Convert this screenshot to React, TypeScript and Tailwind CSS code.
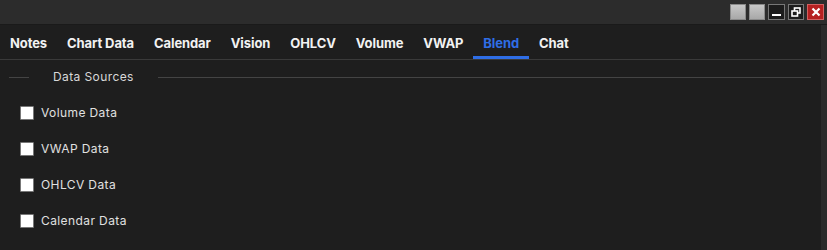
import React from "react";

const tabs = ["Notes", "Chart Data", "Calendar", "Vision", "OHLCV", "Volume", "VWAP", "Blend", "Chat"];
const items = ["Volume Data", "VWAP Data", "OHLCV Data", "Calendar Data"];

export default function App() {
  return (
    <div className="w-[827px] h-[250px] bg-[#1e1e1e] flex flex-col overflow-hidden" style={{ fontFamily: "Inter, 'Noto Sans', sans-serif" }}>
      <div className="h-[25px] bg-[#2c2c2c] border-b border-[#1a1a1a] flex items-start justify-end pt-[4px] pr-[3px] gap-[3px]">
        <div className="w-[16px] h-[16px] bg-gradient-to-b from-[#c8c8c8] to-[#a8a8a8] border border-[#8a8a8a]" />
        <div className="w-[16px] h-[16px] bg-gradient-to-b from-[#c8c8c8] to-[#a8a8a8] border border-[#8a8a8a]" />
        <div className="w-[17px] h-[16px] bg-[#1c1c1c] border border-[#777] flex items-end justify-center pb-[3px]">
          <div className="w-[9px] h-[2px] bg-white" />
        </div>
        <div className="w-[16px] h-[16px] bg-[#1c1c1c] border border-[#777] flex items-center justify-center">
          <svg width="10" height="10" viewBox="0 0 10 10">
            <rect x="3.5" y="1" width="5.5" height="5" fill="none" stroke="white" strokeWidth="1.6" />
            <rect x="1" y="4" width="5.5" height="5" fill="#1c1c1c" stroke="white" strokeWidth="1.6" />
          </svg>
        </div>
        <div className="w-[17px] h-[16px] bg-[#b62020] border border-[#d06060] flex items-center justify-center">
          <svg width="10" height="10" viewBox="0 0 10 10">
            <path d="M1.5 1.5 L8.5 8.5 M8.5 1.5 L1.5 8.5" stroke="white" strokeWidth="2.2" />
          </svg>
        </div>
      </div>
      <div className="flex flex-1">
        <div className="flex-1 flex flex-col">
          <div className="h-[35px] flex items-stretch border-b border-[#3a3a3a]">
            {tabs.map((t) => (
              <div
                key={t}
                className={
                  "px-[10px] pt-[6px] flex items-center text-[13px] font-bold tracking-[-0.1px] border-b-[3px] " +
                  (t === "Blend" ? "text-[#2f6ee6] border-[#2f6ee6]" : "text-[#f2f2f2] border-transparent")
                }
              >
                {t}
              </div>
            ))}
          </div>
          <div className="flex items-center mt-[8px] pl-[9px] pr-[10px]">
            <div className="w-[20px] h-px bg-[#444]" />
            <div className="px-[24px] text-[12px] tracking-[0.4px] text-[#d8d8d8]">Data Sources</div>
            <div className="flex-1 h-px bg-[#444]" />
          </div>
          <div className="flex flex-col pl-[20px] mt-[20px] gap-[22px]">
            {items.map((i) => (
              <div key={i} className="flex items-center gap-[7px] h-[14px]">
                <div className="w-[14px] h-[14px] bg-white border border-[#777] rounded-[1px]" />
                <span className="text-[12px] tracking-[0.4px] text-[#e0e0e0]">{i}</span>
              </div>
            ))}
          </div>
        </div>
        <div className="w-[6px] bg-[#2a2a2a]" />
      </div>
    </div>
  );
}
